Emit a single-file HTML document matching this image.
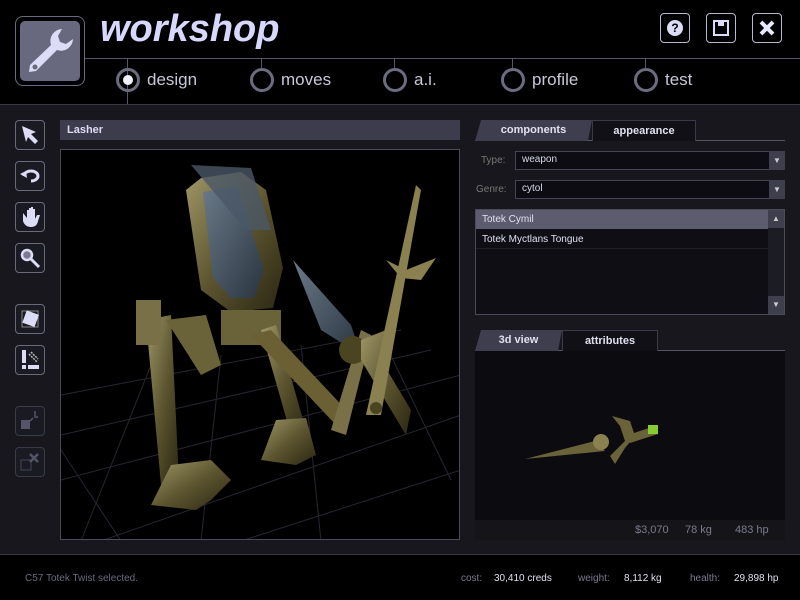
<!DOCTYPE html>
<html><head><meta charset="utf-8"><style>
*{margin:0;padding:0;box-sizing:border-box}
body{width:800px;height:600px;background:#000;position:relative;overflow:hidden;font-family:"Liberation Sans",sans-serif}
.a{position:absolute}
.nav{color:#c8c8d8;font-size:17px;top:70px}
.ring{width:24px;height:24px;border:3px solid #6c6c80;border-radius:50%;top:68px}
.tool{left:15px;width:30px;height:30px;border:1px solid #6a6a7c;border-radius:4px;background:#1a1a22}
.tb{width:30px;height:30px;border:1px solid #b8b8d0;border-radius:4px;top:13px}
.lbl{color:#777;font-size:10px}
.sel{background:#0c0c12;border:1px solid #444452;color:#d8d8e8;font-size:10px;padding:2px 6px;height:19px}
.arr{width:16px;height:19px;background:#3e3e4c;color:#ccc;font-size:8px;text-align:center;line-height:19px}
.tab{height:21px;color:#e0e0f0;font-size:11px;font-weight:bold;text-align:center;line-height:21px}
</style></head><body>
<div class="a" style="left:15px;top:16px;width:70px;height:70px;border:1px solid #6a6a80;border-radius:8px;background:#000"></div>
<div class="a" style="left:20px;top:21px;width:60px;height:60px;background:#68687e;border-radius:5px"></div>
<svg class="a" style="left:20px;top:21px" width="60" height="60" viewBox="0 0 60 60"><path d="M42 8 a12 12 0 0 0 -11 16 L10 44 l-1 7 7 -1 21 -21 a12 12 0 0 0 16 -11 l-7 5 -6 -2 -2 -6z" fill="#dcdcf6"/><circle cx="15" cy="46" r="2.5" fill="#68687e"/></svg>
<div class="a" style="left:100px;top:8px;font-size:38px;font-weight:bold;font-style:italic;color:#d8d8ff">workshop</div>
<div class="a" style="left:85px;top:58px;width:715px;height:1px;background:#55556a"></div>
<div class="a" style="left:127px;top:58px;width:1px;height:46px;background:#55556a"></div>
<div class="a" style="left:261px;top:58px;width:1px;height:10px;background:#55556a"></div>
<div class="a" style="left:394px;top:58px;width:1px;height:10px;background:#55556a"></div>
<div class="a" style="left:512px;top:58px;width:1px;height:10px;background:#55556a"></div>
<div class="a" style="left:645px;top:58px;width:1px;height:10px;background:#55556a"></div>
<div class="a ring" style="left:116px"></div><div class="a" style="left:123px;top:75px;width:10px;height:10px;border-radius:50%;background:#f0f0ff"></div>
<div class="a nav" style="left:147px">design</div>
<div class="a ring" style="left:250px"></div><div class="a nav" style="left:281px">moves</div>
<div class="a ring" style="left:383px"></div><div class="a nav" style="left:414px">a.i.</div>
<div class="a ring" style="left:501px"></div><div class="a nav" style="left:532px">profile</div>
<div class="a ring" style="left:634px"></div><div class="a nav" style="left:665px">test</div>
<div class="a tb" style="left:660px"><div style="width:16px;height:16px;border-radius:50%;background:#dcdcf6;margin:6px;color:#000;font-size:12px;font-weight:bold;text-align:center;line-height:16px">?</div></div>
<div class="a tb" style="left:706px"><svg width="28" height="28"><rect x="7" y="7" width="14" height="14" fill="none" stroke="#dcdcf6" stroke-width="2"/><rect x="11" y="7" width="6" height="5" fill="#dcdcf6"/></svg></div>
<div class="a tb" style="left:752px"><svg width="28" height="28"><path d="M8 8L20 20M20 8L8 20" stroke="#e8e8ff" stroke-width="4"/></svg></div>
<div class="a" style="left:0;top:104px;width:800px;height:451px;background:#17171d;border-top:1px solid #3a3a48;border-bottom:1px solid #3a3a48"></div>
<div class="a tool" style="top:120px"><svg width="28" height="28"><path d="M6 5L20 11 15 13 22 20 19 23 12 16 10 21z" fill="#dcdcf6"/></svg></div>
<div class="a tool" style="top:161px"><svg width="28" height="28"><path d="M8 14a7 5 0 1 1 7 5" fill="none" stroke="#dcdcf6" stroke-width="3"/><path d="M4 12l6 -3 1 7z" fill="#dcdcf6"/></svg></div>
<div class="a tool" style="top:202px"><svg width="28" height="28"><path d="M7 10v8q2 6 8 6t7-6l2-6-3 0-2 4V6h-2v7V4h-2v9V5h-2v9V7h-2v8z" fill="#dcdcf6"/></svg></div>
<div class="a tool" style="top:243px"><svg width="28" height="28"><circle cx="11" cy="11" r="5" fill="#7a7a90" stroke="#dcdcf6" stroke-width="2.5"/><path d="M15 15l8 8" stroke="#dcdcf6" stroke-width="3"/></svg></div>
<div class="a tool" style="top:304px"><svg width="28" height="28"><rect x="6" y="6" width="16" height="16" fill="none" stroke="#888" /><rect x="8" y="7" width="13" height="13" fill="#dcdcf6" transform="rotate(20 14 14)"/></svg></div>
<div class="a tool" style="top:345px"><svg width="28" height="28"><rect x="6" y="4" width="4" height="13" fill="#dcdcf6"/><rect x="6" y="19" width="4" height="4" fill="#dcdcf6"/><rect x="12" y="19" width="11" height="4" fill="#dcdcf6"/><path d="M13 8l8 8M15 6l7 7" stroke="#bbb" stroke-width="1.5" stroke-dasharray="2 1"/></svg></div>
<div class="a tool" style="top:406px;border-color:#3a3a48"><svg width="28" height="28"><rect x="5" y="13" width="9" height="9" fill="#55556a"/><path d="M19 4v5M22 10h-4M17 11l-3 3" stroke="#55556a" stroke-width="1.5"/></svg></div>
<div class="a tool" style="top:447px;border-color:#3a3a48"><svg width="28" height="28"><rect x="5" y="12" width="10" height="10" fill="none" stroke="#44445a"/><path d="M14 6l8 8M22 6l-8 8" stroke="#55556a" stroke-width="2.5"/></svg></div>
<div class="a" style="left:60px;top:120px;width:400px;height:20px;background:#3c3c4c;color:#dcdcf6;font-size:11px;font-weight:bold;padding:4px 7px">Lasher</div>
<div class="a" style="left:60px;top:149px;width:400px;height:391px;background:#000;border:1px solid #4a4a5c;overflow:hidden">
<svg width="400" height="391" viewBox="0 0 400 391">
<defs><linearGradient id="g" x1="0" y1="0" x2="1" y2="1"><stop offset="0" stop-color="#a09868"/><stop offset=".5" stop-color="#5e5630"/><stop offset="1" stop-color="#2a2612"/></linearGradient>
<linearGradient id="b" x1="0" y1="0" x2="1" y2="1"><stop offset="0" stop-color="#6a7a88"/><stop offset="1" stop-color="#2a3440"/></linearGradient></defs>
<g stroke="#262632" stroke-width="1" fill="none">
<path d="M0 245L340 180M0 285L370 200M0 330L400 225M40 391L400 265M180 391L400 320"/>
<path d="M90 215L20 391M160 205L140 391M240 195L260 391M320 185L390 330M0 300L60 391"/>
</g>
<path d="M125 40L140 28 180 22 205 40 222 118 212 158 170 162 140 140z" fill="url(#g)"/>
<path d="M142 42L176 36 203 120 193 148 170 148 152 128z" fill="url(#b)"/>
<path d="M130 15L190 18 210 80 185 80z" fill="#4a5866" opacity=".8"/>
<rect x="160" y="160" width="60" height="35" fill="#6a6238"/>
<path d="M85 170L110 165 118 330 100 335z" fill="url(#g)"/>
<rect x="75" y="150" width="25" height="45" fill="#7a7048"/>
<path d="M105 170L145 165 160 215 140 225z" fill="#6a6238"/>
<path d="M110 315L150 310 170 330 150 350 135 360 90 355z" fill="url(#g)"/>
<path d="M200 180L215 175 245 280 230 285z" fill="url(#g)"/>
<path d="M215 270L245 268 255 305 235 315 200 310z" fill="url(#g)"/>
<path d="M190 185L210 180 290 265 275 275z" fill="#6a6034"/>
<path d="M270 280L300 180 310 185 285 285z" fill="#7a7048"/>
<path d="M232 110L290 175 300 205 260 180z" fill="url(#b)"/>
<circle cx="292" cy="200" r="14" fill="#4a4420"/>
<path d="M300 190L325 180 320 210 350 260 345 285 300 210z" fill="url(#g)"/>
<path d="M305 265L355 35 360 40 320 265z" fill="#8a8050"/>
<path d="M325 110L345 120 375 108 360 130 340 128z" fill="#8a8050"/>
<circle cx="315" cy="258" r="6" fill="#4a4420"/>
</svg></div>
<div class="a" style="left:475px;top:140px;width:310px;height:1px;background:#55556a"></div>
<div class="a tab" style="left:475px;top:120px;width:117px;background:#3e3e4e;clip-path:polygon(6px 0,100% 0,calc(100% - 4px) 100%,0 100%)">components</div>
<div class="a tab" style="left:592px;top:120px;width:104px;border:1px solid #3a3a4a;border-bottom:none;background:#101016">appearance</div>
<div class="a lbl" style="left:481px;top:155px">Type:</div>
<div class="a sel" style="left:515px;top:151px;width:255px">weapon</div><div class="a arr" style="left:769px;top:151px">▼</div>
<div class="a lbl" style="left:476px;top:184px">Genre:</div>
<div class="a sel" style="left:515px;top:180px;width:255px">cytol</div><div class="a arr" style="left:769px;top:180px">▼</div>
<div class="a" style="left:475px;top:209px;width:310px;height:106px;background:#0e0e14;border:1px solid #4a4a5a"></div>
<div class="a" style="left:476px;top:210px;width:292px;height:19px;background:#5c5c6e;color:#e0e0f0;font-size:10px;padding:4px 6px">Totek Cymil</div>
<div class="a" style="left:476px;top:230px;width:292px;height:19px;border-bottom:1px solid #1e1e26;color:#e0e0f0;font-size:10px;padding:4px 6px">Totek Myctlans Tongue</div>
<div class="a" style="left:768px;top:210px;width:16px;height:104px;background:#1c1c24"></div>
<div class="a arr" style="left:768px;top:210px;height:18px;line-height:18px">▲</div>
<div class="a arr" style="left:768px;top:296px;height:18px;line-height:18px">▼</div>
<div class="a" style="left:475px;top:350px;width:310px;height:1px;background:#55556a"></div>
<div class="a tab" style="left:475px;top:330px;width:87px;background:#3e3e4e;clip-path:polygon(6px 0,100% 0,calc(100% - 4px) 100%,0 100%)">3d view</div>
<div class="a tab" style="left:562px;top:330px;width:96px;border:1px solid #3a3a4a;border-bottom:none;background:#101016">attributes</div>
<div class="a" style="left:475px;top:351px;width:310px;height:169px;background:#0b0b10">
<svg width="310" height="169"><path d="M50 108L120 90 130 100z" fill="#6a6238"/><circle cx="126" cy="91" r="8" fill="#8a8050"/><path d="M137 65L155 70 160 85 150 97 140 113 135 105 150 90 145 75z" fill="#6a6238"/><path d="M150 85L180 75 183 83 155 92z" fill="#6a6238"/><rect x="173" y="74" width="10" height="9" fill="#88cc33"/></svg>
</div>
<div class="a" style="left:475px;top:520px;width:310px;height:20px;background:#141419;color:#7a7a8e;font-size:11px">
<span class="a" style="left:160px;top:4px">$3,070</span><span class="a" style="left:210px;top:4px">78 kg</span><span class="a" style="left:260px;top:4px">483 hp</span></div>
<div class="a" style="left:25px;top:573px;color:#6a6a80;font-size:10px">C57 Totek Twist selected.</div>
<div class="a" style="left:461px;top:573px;color:#7a7a8e;font-size:10px">cost:</div>
<div class="a" style="left:494px;top:573px;color:#e0e0f0;font-size:10px">30,410 creds</div>
<div class="a" style="left:578px;top:573px;color:#7a7a8e;font-size:10px">weight:</div>
<div class="a" style="left:624px;top:573px;color:#e0e0f0;font-size:10px">8,112 kg</div>
<div class="a" style="left:690px;top:573px;color:#7a7a8e;font-size:10px">health:</div>
<div class="a" style="left:734px;top:573px;color:#e0e0f0;font-size:10px">29,898 hp</div>
</body></html>
